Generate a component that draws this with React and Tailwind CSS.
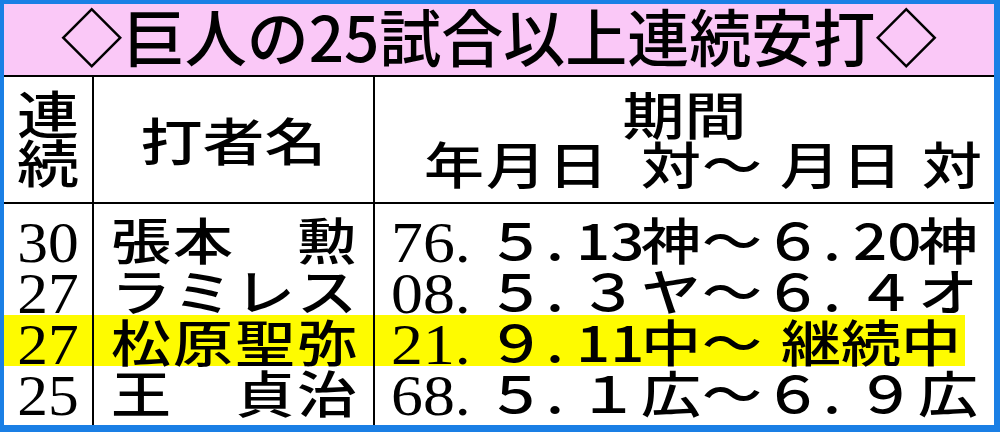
import React from "react";

const G = "font-['Noto_Sans_CJK_JP',sans-serif] font-medium";
const S = "font-['Liberation_Serif',serif]";

const rows = [
  { n: "30", name: ["張", "本", "", "勲"], y: "76.", m: "５", d: "13", t: "神", end: ["６", "20", "神"] },
  { n: "27", name: ["ラ", "ミ", "レ", "ス"], y: "08.", m: "５", d: "３", t: "ヤ", end: ["６", "４", "オ"] },
  { n: "27", name: ["松", "原", "聖", "弥"], y: "21.", m: "９", d: "11", t: "中", hl: true },
  { n: "25", name: ["王", "", "貞", "治"], y: "68.", m: "５", d: "１", t: "広", end: ["６", "９", "広"] },
];

// gothic glyph cell, flattened like the newspaper type
function Gc({ className = "", children }) {
  return (
    <span
      className={`${G} block shrink-0 text-center text-[60px] leading-[51px] h-[51px] scale-y-[0.83] ${className}`}
    >
      {children}
    </span>
  );
}

function Period({ r }) {
  return (
    <div className={`flex h-full ${r.hl ? "w-[590px] bg-[#fefb00]" : ""}`}>
      <span className={`${S} block shrink-0 w-[111px] pl-[16px] text-[58px] leading-[59px]`}>
        <span className="inline-block origin-left scale-x-[1.1]">{r.y}</span>
      </span>
      <Gc className="w-[60px]">{r.m}</Gc>
      <Gc className="w-[30px] text-left">.</Gc>
      <Gc className="w-[65px]">{r.d}</Gc>
      <Gc className="w-[60px]">{r.t}</Gc>
      <Gc className="w-[62px]">～</Gc>
      {r.hl ? (
        <>
          <span className="block w-[18px] shrink-0" />
          <Gc className="w-[60px]">継</Gc>
          <Gc className="w-[60px]">続</Gc>
          <Gc className="w-[60px]">中</Gc>
        </>
      ) : (
        <>
          <Gc className="w-[60px]">{r.end[0]}</Gc>
          <Gc className="w-[30px] text-left">.</Gc>
          <Gc className="w-[65px]">{r.end[1]}</Gc>
          <Gc className="w-[60px]">{r.end[2]}</Gc>
        </>
      )}
    </div>
  );
}

export default function App() {
  return (
    <div className="w-[1000px] h-[432px] bg-[#1a7fe5] pl-[4px] pt-[4px] pr-[6px] pb-[7px] text-black">
      <div className="bg-white h-full flex flex-col">
        {/* title */}
        <div className="h-[73px] shrink-0 bg-[#fac8f7] border-b-2 border-black flex items-center justify-center pb-[9px]">
          <span className={`${G} text-[62px] leading-[62px] whitespace-nowrap`}>
            ◇巨人の25試合以上連続安打◇
          </span>
        </div>

        <div className="flex-1 grid grid-cols-[90px_281px_1fr] grid-rows-[127px_9px_51px_51px_51px_51px_1fr]">
          {/* header */}
          <div className="border-r-2 border-b-2 border-black flex flex-col items-center justify-center pb-[6px]">
            <span className={`${G} block text-[62px] leading-[49px] scale-y-[0.83]`}>連</span>
            <span className={`${G} block text-[62px] leading-[49px] scale-y-[0.83]`}>続</span>
          </div>
          <div className="border-r-2 border-b-2 border-black flex items-center justify-center">
            <span className={`${G} block text-[62px] leading-[125px] scale-y-[0.83]`}>打者名</span>
          </div>
          <div className="border-b-2 border-black flex flex-col justify-center pb-[4px]">
            <span className={`${G} block text-center text-[62px] leading-[49px] scale-y-[0.83]`}>期間</span>
            <div className="flex">
              <span className="block w-[48px] shrink-0" />
              <span className={`${G} block w-[62px] shrink-0 text-center text-[60px] leading-[49px] scale-y-[0.83]`}>年</span>
              <span className={`${G} block w-[62px] shrink-0 text-center text-[60px] leading-[49px] scale-y-[0.83]`}>月</span>
              <span className={`${G} block w-[62px] shrink-0 text-center text-[60px] leading-[49px] scale-y-[0.83]`}>日</span>
              <span className="block w-[32px] shrink-0" />
              <span className={`${G} block w-[60px] shrink-0 text-center text-[60px] leading-[49px] scale-y-[0.83]`}>対</span>
              <span className={`${G} block w-[62px] shrink-0 text-center text-[60px] leading-[49px] scale-y-[0.83]`}>～</span>
              <span className="block w-[16px] shrink-0" />
              <span className={`${G} block w-[62px] shrink-0 text-center text-[60px] leading-[49px] scale-y-[0.83]`}>月</span>
              <span className={`${G} block w-[62px] shrink-0 text-center text-[60px] leading-[49px] scale-y-[0.83]`}>日</span>
              <span className="block w-[18px] shrink-0" />
              <span className={`${G} block w-[62px] shrink-0 text-center text-[60px] leading-[49px] scale-y-[0.83]`}>対</span>
            </div>
          </div>

          {/* top gap */}
          <div className="border-r-2 border-black" />
          <div className="border-r-2 border-black" />
          <div />

          {rows.map((r, i) => (
            <React.Fragment key={i}>
              <div className={`border-r-2 border-black text-center ${r.hl ? "bg-[#fefb00]" : ""}`}>
                <span className={`${S} inline-block scale-x-[1.06] text-[58px] leading-[59px]`}>{r.n}</span>
              </div>
              <div className={`border-r-2 border-black flex pl-[16px] ${r.hl ? "bg-[#fefb00]" : ""}`}>
                {r.name.map((c, j) => (
                  <Gc key={j} className="w-[62px]">{c}</Gc>
                ))}
              </div>
              <div>
                <Period r={r} />
              </div>
            </React.Fragment>
          ))}

          {/* bottom gap */}
          <div className="border-r-2 border-black" />
          <div className="border-r-2 border-black" />
          <div />
        </div>
      </div>
    </div>
  );
}
